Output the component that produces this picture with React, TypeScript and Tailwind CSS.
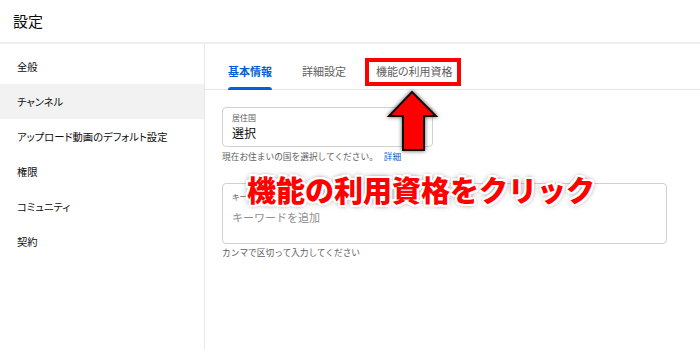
import React from 'react';

const sideItems = ['全般', 'チャンネル', 'アップロード動画のデフォルト設定', '権限', 'コミュニティ', '契約'];
const tabs = ['基本情報', '詳細設定', '機能の利用資格'];

function ClickArrow() {
  return (
    <svg width="70" height="80" viewBox="380 84 70 80" className="absolute left-[380px] top-[84px]">
      <defs>
        <filter id="glow" x="-30%" y="-30%" width="160%" height="160%">
          <feGaussianBlur in="SourceAlpha" stdDeviation="2.2" result="b" />
          <feFlood floodColor="#555" />
          <feComposite in2="b" operator="in" result="s" />
          <feMerge>
            <feMergeNode in="s" />
            <feMergeNode in="SourceGraphic" />
          </feMerge>
        </filter>
      </defs>
      <polygon
        points="412,92 389,116 403,116 403,150 424,150 424,116 436,116"
        fill="#ff0000"
        stroke="#111"
        strokeWidth="2"
        strokeLinejoin="miter"
        filter="url(#glow)"
      />
    </svg>
  );
}

export default function App() {
  return (
    <div className="relative w-[700px] h-[350px] overflow-hidden bg-white text-[#0d0d0d] [font-family:'Noto_Sans_CJK_JP','Noto_Sans',sans-serif] [font-feature-settings:'palt']">
      {/* header */}
      <div className="h-[42px] px-[13px] flex items-center text-[15px]">設定</div>
      <div className="h-[2px] bg-[#eeeeee]" />

      <div className="flex h-[306px]">
        {/* sidebar */}
        <div className="w-[205px] shrink-0 border-r border-[#e8e8e8] pt-[5px]">
          {sideItems.map((item, i) => (
            <div
              key={item}
              className={`h-[35px] px-[17px] flex items-center text-[10.3px] ${i === 1 ? 'bg-[#f2f2f2]' : ''}`}
            >
              {item}
            </div>
          ))}
        </div>

        {/* main */}
        <div className="flex-1">
          <div className="h-[46px] border-b border-[#e5e5e5] flex gap-[30px] px-[23px] pt-[9px]">
            {tabs.map((t, i) => (
              <div
                key={t}
                className={`relative flex items-center text-[11px] ${i === 0 ? 'font-bold text-[#065fd4]' : 'text-[#606060]'}`}
              >
                {t}
                {i === 0 && <div className="absolute left-0 right-0 bottom-[-1px] h-[3px] rounded-t-sm bg-[#065fd4]" />}
              </div>
            ))}
          </div>

          <div className="px-[17px] pt-[17px]">
            <div className="w-[211px] h-[40px] border border-[#d0d0d0] rounded-[4px] px-[9px] pt-[4px]">
              <div className="text-[8px] text-[#606060] leading-[12px]">居住国</div>
              <div className="text-[12px] leading-[17px]">選択</div>
            </div>
            <div className="mt-[4px] text-[8.7px] text-[#606060] leading-[12px] [font-feature-settings:normal]">
              現在お住まいの国を選択してください。<span className="ml-[6px] text-[#065fd4]">詳細</span>
            </div>

            <div className="mt-[20px] w-[445px] h-[61px] border border-[#d0d0d0] rounded-[4px] px-[9px] pt-[7px]">
              <div className="text-[8px] text-[#606060] leading-[12px]">キーワード</div>
              <div className="mt-[6px] text-[11px] text-[#909090] leading-[16px] [font-feature-settings:normal]">キーワードを追加</div>
            </div>
            <div className="mt-[3px] text-[8.7px] text-[#606060] leading-[12px] [font-feature-settings:normal]">カンマで区切って入力してください</div>
          </div>
        </div>
      </div>

      {/* annotations */}
      <div className="absolute left-[365px] top-[58px] w-[96px] h-[28px] border-[4px] border-[#ff0000]" />
      <ClickArrow />
      <div className="absolute left-[247px] top-[175px] text-[29px] leading-none font-black text-[#ff0000] [font-feature-settings:normal] whitespace-nowrap [text-shadow:2px_0_0_#fff,-2px_0_0_#fff,0_2px_0_#fff,0_-2px_0_#fff,2px_2px_0_#fff,-2px_-2px_0_#fff,2px_-2px_0_#fff,-2px_2px_0_#fff,0_0_6px_#666,0_0_4px_#888]">
        機能の利用資格をクリック
      </div>
    </div>
  );
}
